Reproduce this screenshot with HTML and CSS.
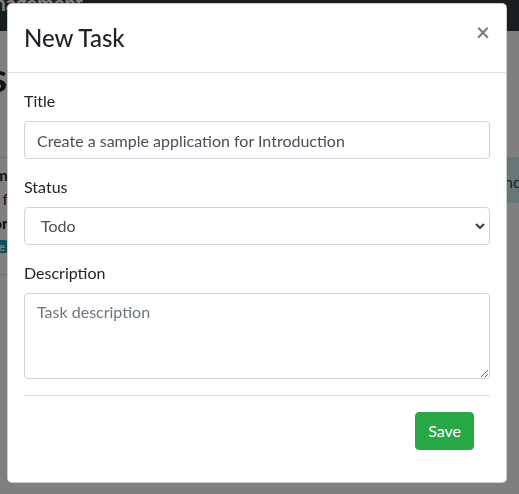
FILE: index.html
```html
<!DOCTYPE html>
<html lang="en">
<head>
<meta charset="utf-8">
<title>Task Management</title>
<link rel="stylesheet" href="styles.css">
</head>
<body>
<div class="page">
  <nav class="navbar"><span class="brand">Task Management</span></nav>
  <main class="content">
    <h1 class="page-title"><span>Tasks</span></h1>
    <div class="task-row">
      <div class="task-list">
        <div class="task-line strong"><span>Item</span></div>
        <div class="task-line"><span><span class="link">Lin</span> f</span></div>
        <div class="task-line strong"><span>Author</span></div>
        <div class="task-line badge-line"><span class="badge">Code</span></div>
      </div>
      <div class="alert"><span>Todo and</span></div>
    </div>
  </main>
</div>

<div class="backdrop"></div>

<div class="modal" role="dialog" aria-labelledby="modalTitle">
  <div class="modal-header">
    <h5 class="modal-title" id="modalTitle">New Task</h5>
    <button type="button" class="close" aria-label="Close">&times;</button>
  </div>
  <div class="modal-body">
    <form class="task-form">
      <div class="form-group">
        <label for="title">Title</label>
        <input id="title" class="form-control" type="text" value="Create a sample application for Introduction">
      </div>
      <div class="form-group">
        <label for="status">Status</label>
        <select id="status" class="form-control form-select">
          <option selected>Todo</option>
          <option>In Progress</option>
          <option>Done</option>
        </select>
      </div>
      <div class="form-group">
        <label for="description">Description</label>
        <textarea id="description" class="form-control form-textarea" rows="3" placeholder="Task description"></textarea>
      </div>
      <div class="modal-footer">
        <button type="submit" class="btn btn-success">Save</button>
      </div>
    </form>
  </div>
</div>
</body>
</html>
```

FILE: styles.css
```css
* { box-sizing: border-box; }

html, body {
  margin: 0;
  padding: 0;
  height: 100%;
  overflow: hidden;
}

body {
  font-family: "Lato", "Liberation Sans", sans-serif;
  font-size: 16px;
  line-height: 1.5;
  color: #212529;
  background: #fff;
}

/* ---------- background page ---------- */
.page {
  display: flex;
  flex-direction: column;
}

.navbar {
  height: 31px;
  background: #343a40;
  display: flex;
  align-items: flex-start;
  overflow: hidden;
}

.brand {
  width: 83px;
  display: flex;
  justify-content: flex-end;
  white-space: nowrap;
  font-size: 20px;
  font-weight: 700;
  line-height: 20px;
  color: #fff;
  margin-top: -7px;
  overflow: hidden;
}

.content {
  display: flex;
  flex-direction: column;
}

.page-title {
  width: 7px;
  display: flex;
  justify-content: flex-end;
  overflow: hidden;
  white-space: nowrap;
  margin: 22px 0 0;
  font-size: 40px;
  line-height: 48px;
  font-weight: 700;
}

.task-row {
  display: flex;
  align-items: flex-start;
  margin-top: 56px;
}

.task-list {
  width: 8px;
  flex: none;
  overflow: hidden;
  border-top: 1px solid #dee2e6;
  border-bottom: 1px solid #dee2e6;
  padding: 5px 0 21px;
}

.task-line {
  display: flex;
  justify-content: flex-end;
  white-space: nowrap;
  line-height: 24px;
}

.task-line.strong { font-weight: 700; }

.link { color: #007bff; }

.badge-line {
  margin-top: 5px;
  line-height: 13px;
}

.badge {
  background: #17a2b8;
  color: #fff;
  font-size: 12px;
  font-weight: 700;
  padding: 0 3px;
  border-radius: 3px;
}

.alert {
  margin-left: auto;
  width: 40px;
  height: 46px;
  background: #d1ecf1;
  color: #0c5460;
  display: flex;
  align-items: center;
  justify-content: flex-end;
  overflow: hidden;
  white-space: nowrap;
  padding-top: 4px;
}

.alert span { margin-right: -3px; }

/* ---------- modal ---------- */
.backdrop {
  position: fixed;
  inset: 0;
  background: rgba(0, 0, 0, 0.5);
}

.modal {
  position: fixed;
  top: 3px;
  left: 7px;
  width: 500px;
  background: #fff;
  border: 1px solid rgba(0, 0, 0, 0.2);
  border-radius: 5px;
  display: flex;
  flex-direction: column;
}

.modal-header {
  display: flex;
  align-items: flex-start;
  padding: 16px;
  border-bottom: 1px solid #dee2e6;
}

.modal-title {
  margin: 0;
  font-size: 24px;
  line-height: 1.5;
  font-weight: 500;
  color: #212529;
}

.close {
  margin: -16px -16px -16px auto;
  padding: 16px;
  background: transparent;
  border: 0;
  font-family: inherit;
  font-size: 24px;
  font-weight: 700;
  line-height: 1;
  color: #000;
  opacity: 0.5;
  cursor: pointer;
}

.modal-body {
  padding: 16px;
}

.task-form {
  display: flex;
  flex-direction: column;
}

.form-group {
  display: flex;
  flex-direction: column;
  margin-bottom: 16px;
}

.form-group label {
  margin-bottom: 8px;
  line-height: 24px;
}

.form-control {
  display: block;
  width: 100%;
  height: 38px;
  padding: 6px 12px;
  font-family: inherit;
  font-size: 16px;
  line-height: 1.5;
  color: #495057;
  background: #fff;
  border: 1px solid #ced4da;
  border-radius: 4px;
  margin: 0;
}

.form-select {
  -webkit-appearance: none;
  appearance: none;
  padding-left: 16px;
  background-image: url("data:image/svg+xml,%3Csvg xmlns='http://www.w3.org/2000/svg' width='10' height='6' viewBox='0 0 10 6'%3E%3Cpath d='M1 1l4 4 4-4' fill='none' stroke='%23343a40' stroke-width='2'/%3E%3C/svg%3E");
  background-repeat: no-repeat;
  background-position: right 4px center;
  background-size: 10px 6px;
}

.form-textarea {
  height: 86px;
  resize: vertical;
}

.form-textarea::placeholder {
  color: #6c757d;
  opacity: 1;
}

.modal-footer {
  display: flex;
  justify-content: flex-end;
  border-top: 1px solid #dee2e6;
  padding: 16px;
}

.btn {
  font-family: inherit;
  font-size: 16px;
  line-height: 1.5;
  padding: 6px 12px;
  border: 1px solid transparent;
  border-radius: 4px;
  cursor: pointer;
}

.btn-success {
  color: #fff;
  background: #28a745;
  border-color: #28a745;
}
```
